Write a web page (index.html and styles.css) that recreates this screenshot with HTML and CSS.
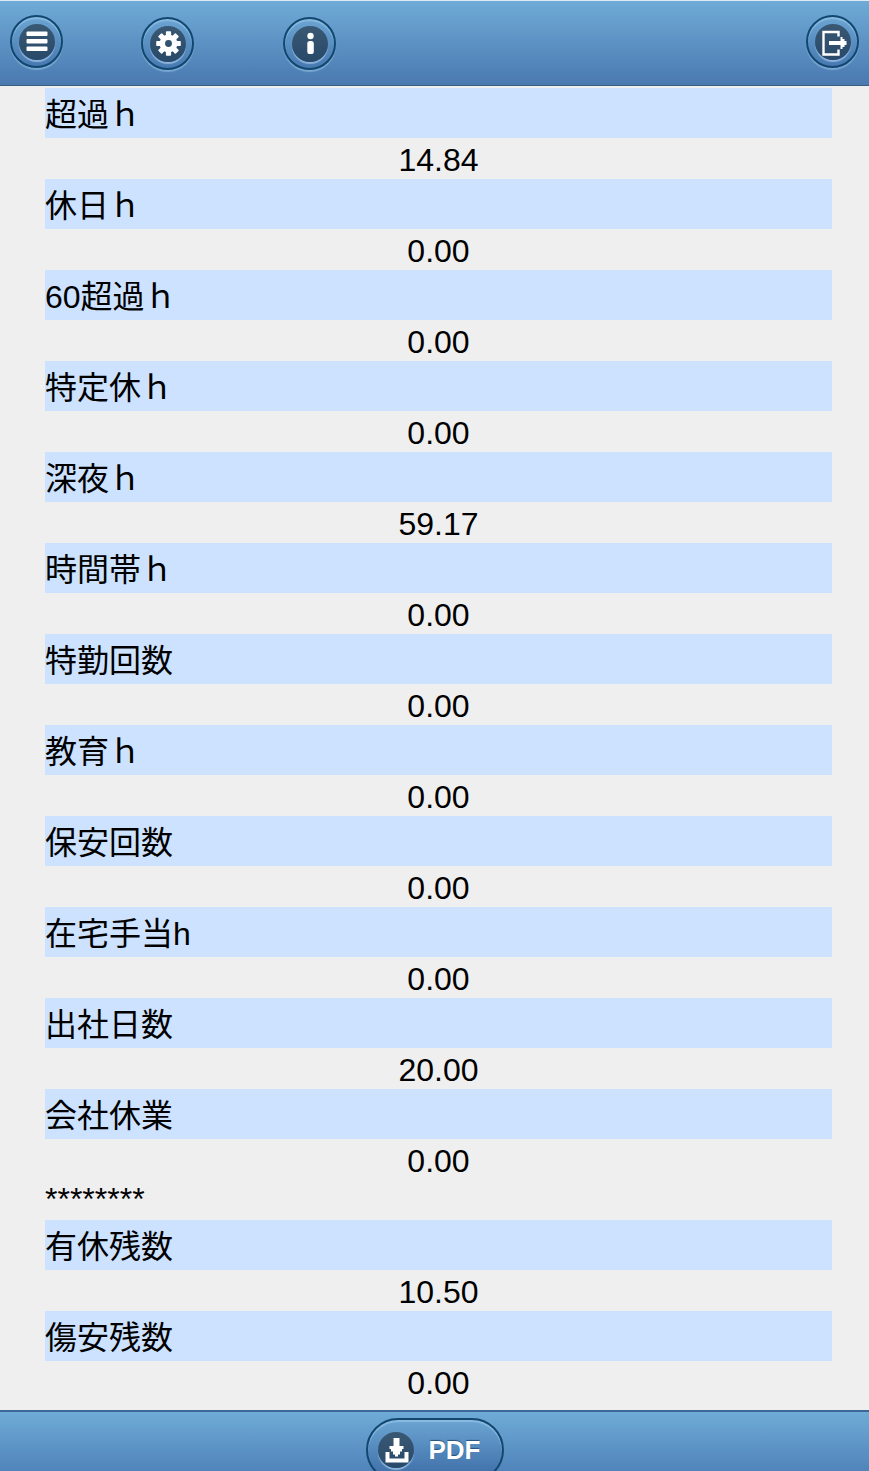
FILE: index.html
```html
<!DOCTYPE html>
<html lang="ja">
<head>
<meta charset="utf-8">
<meta name="viewport" content="width=device-width, initial-scale=1">
<title>勤怠集計</title>
<link rel="stylesheet" href="styles.css">
</head>
<body>
<div class="app">
  <header class="toolbar">
    <button class="round-button" type="button" aria-label="メニュー">
      <svg class="icon" viewBox="0 0 36 36" aria-hidden="true"><path d="M8.500 7.500h19q1 0 1 1v2.500q0 1-1 1h-19q-1 0-1-1v-2.500q0-1 1-1zM8.500 15h19q1 0 1 1v2.500q0 1-1 1h-19q-1 0-1-1v-2.500q0-1 1-1zM8.500 22.500h19q1 0 1 1v2.500q0 1-1 1h-19q-1 0-1-1v-2.500q0-1 1-1z"/></svg>
    </button>
    <button class="round-button round-button-low settings" type="button" aria-label="設定">
      <svg class="icon" viewBox="0 0 36 36" aria-hidden="true">
        <g transform="translate(18.500 17.500)">
          <circle r="6.200" fill="none" stroke="#fff" stroke-width="5.500"/>
          <g id="teeth"><rect x="-2.600" y="-12.300" width="5.200" height="5" rx="0.800"/><rect x="-2.600" y="7.300" width="5.200" height="5" rx="0.800"/><rect x="-12.300" y="-2.600" width="5" height="5.200" rx="0.800"/><rect x="7.300" y="-2.600" width="5" height="5.200" rx="0.800"/></g>
          <use href="#teeth" transform="rotate(45)"/>
        </g>
      </svg>
    </button>
    <button class="round-button round-button-low info" type="button" aria-label="情報">
      <svg class="icon" viewBox="0 0 36 36" aria-hidden="true"><circle cx="18.500" cy="10" r="3.200"/><rect x="15.300" y="15" width="6.500" height="13" rx="2.600"/></svg>
    </button>
    <button class="round-button logout" type="button" aria-label="ログアウト">
      <svg class="icon" viewBox="0 0 36 36" aria-hidden="true"><path d="M23.500 12.500V8H8.500V30.500h15v-5" fill="none" stroke="#fff" stroke-width="2.400"/><path d="M14 17H25.500V13h2v2h2v2h2v4h-2v2h-2v2h-2V21H14z"/></svg>
    </button>
  </header>
  <main class="content">
    <dl class="summary">
      <dt>超過ｈ</dt><dd>14.84</dd>
      <dt>休日ｈ</dt><dd>0.00</dd>
      <dt>60超過ｈ</dt><dd>0.00</dd>
      <dt>特定休ｈ</dt><dd>0.00</dd>
      <dt>深夜ｈ</dt><dd>59.17</dd>
      <dt>時間帯ｈ</dt><dd>0.00</dd>
      <dt>特勤回数</dt><dd>0.00</dd>
      <dt>教育ｈ</dt><dd>0.00</dd>
      <dt>保安回数</dt><dd>0.00</dd>
      <dt>在宅手当h</dt><dd>0.00</dd>
      <dt>出社日数</dt><dd>20.00</dd>
      <dt>会社休業</dt><dd>0.00</dd>
    </dl>
    <p class="separator">********</p>
    <dl class="summary">
      <dt>有休残数</dt><dd>10.50</dd>
      <dt>傷安残数</dt><dd>0.00</dd>
    </dl>
  </main>
  <footer class="footer">
    <button class="pdf-button" type="button">
      <svg class="icon" viewBox="0 0 36 36" aria-hidden="true"><path d="M15.500 6h6v8h4v3H24v2.500h-2v3h-2v2h-3v-2h-2v-3h-2V17h-1.500v-3h4z"/><path d="M7.500 20h4v6.500h15V20h4v10.500h-23z"/></svg>
      <span>PDF</span>
    </button>
  </footer>
</div>
</body>
</html>
```
FILE: styles.css
```css
* {
  box-sizing: border-box;
}

body {
  margin: 0;
  background: #efefef;
  color: #000;
  font-family: "Liberation Sans", "Noto Sans CJK JP", sans-serif;
  font-size: 32px;
}

.app {
  display: flex;
  flex-direction: column;
  height: 100vh;
  overflow: hidden;
}

.toolbar {
  display: flex;
  align-items: flex-start;
  flex: none;
  height: 86px;
  padding: 14px 10px 0;
  border-top: 1px solid #dcebf5;
  border-bottom: 1px solid #3d5d80;
  background: linear-gradient(#6fabd7, #4a79b0);
}

.round-button {
  display: flex;
  align-items: center;
  justify-content: center;
  width: 53px;
  height: 53px;
  padding: 0;
  border: 2px solid #124870;
  border-radius: 50%;
  background: linear-gradient(#6ba5d3, #4779b0);
  box-shadow: 0 2px 1px #79a8d3, inset 0 2px 1px #8abbe1;
}

.round-button-low {
  margin-top: 2px;
}

.settings {
  margin-left: 78px;
}

.info {
  margin-left: 89px;
}

.logout {
  margin-left: auto;
}

.icon {
  flex: none;
  width: 36px;
  height: 36px;
  border-radius: 50%;
  background: linear-gradient(#385873, #29496a);
  box-shadow: 0 2px 1px #8db4dc;
  fill: #fff;
}

.content {
  flex: 1;
  min-height: 0;
  padding: 2px 37px 8px 45px;
  overflow: hidden;
}

.summary {
  margin: 0;
}

.summary dt {
  height: 50px;
  background: #cce2ff;
  line-height: 54px;
}

.summary dd {
  height: 41px;
  margin: 0;
  line-height: 44px;
  text-align: center;
}

.separator {
  height: 40px;
  margin: 0;
  line-height: 38px;
}

.footer {
  display: flex;
  align-items: flex-start;
  justify-content: center;
  flex: none;
  height: 61px;
  padding-top: 6px;
  overflow: hidden;
  border-top: 2px solid #3c6797;
  background: linear-gradient(#6fabd7, #5084ba);
}

.pdf-button {
  display: flex;
  align-items: center;
  flex: none;
  gap: 15px;
  height: 64px;
  padding: 0 21px 0 10px;
  border: 2px solid #124870;
  border-radius: 32px;
  background: linear-gradient(#6ba5d3, #3c6ba5);
  box-shadow: inset 0 2px 1px #8abbe1;
  color: #fff;
  font-family: inherit;
  font-size: 26px;
  font-weight: bold;
  text-shadow: 0 -1px 1px #24527f;
}
```
